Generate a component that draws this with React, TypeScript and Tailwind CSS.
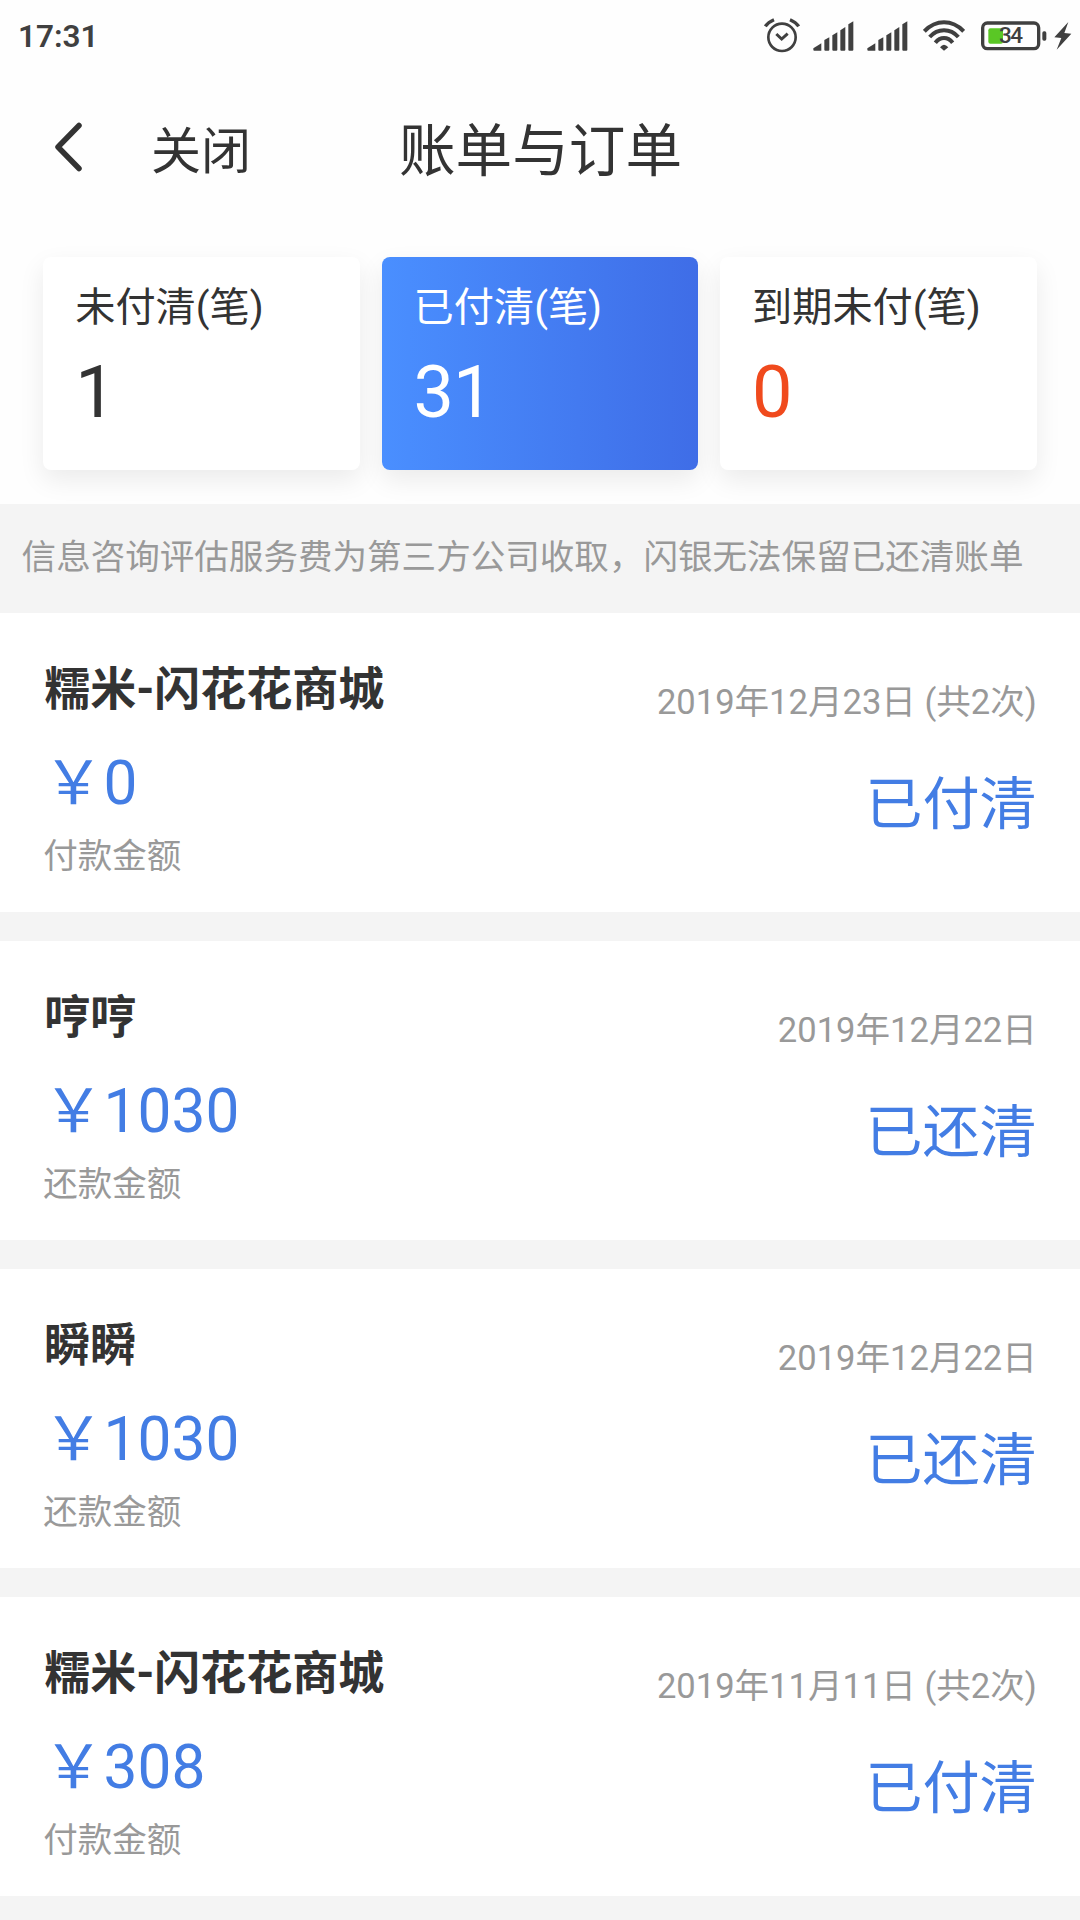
import { clsx } from 'clsx'

interface Summary {
  label: string
  count: number
  tone: 'normal' | 'active' | 'alert'
}

interface Bill {
  id: number
  title: string
  date: string
  amount: string
  amountLabel: string
  status: string
}

const summaries: Summary[] = [
  { label: '未付清(笔)', count: 1, tone: 'normal' },
  { label: '已付清(笔)', count: 31, tone: 'active' },
  { label: '到期未付(笔)', count: 0, tone: 'alert' },
]

const bills: Bill[] = [
  { id: 1, title: '糯米-闪花花商城', date: '2019年12月23日 (共2次)', amount: '0', amountLabel: '付款金额', status: '已付清' },
  { id: 2, title: '哼哼', date: '2019年12月22日', amount: '1030', amountLabel: '还款金额', status: '已还清' },
  { id: 3, title: '瞬瞬', date: '2019年12月22日', amount: '1030', amountLabel: '还款金额', status: '已还清' },
  { id: 4, title: '糯米-闪花花商城', date: '2019年11月11日 (共2次)', amount: '308', amountLabel: '付款金额', status: '已付清' },
]

function AlarmIcon() {
  return (
    <svg className="h-[35px] w-9" viewBox="72 56 108 105" fill="none" stroke="#404040" strokeWidth="8">
      <circle cx="126" cy="114" r="41" />
      <path d="M109 104l16 15 18-16" strokeWidth="9" />
      <path d="M76 81q9-13 26-20M176 81q-9-13-26-20" strokeWidth="10" />
    </svg>
  )
}

function SignalIcon() {
  return (
    <svg className="h-[30px] w-[41px]" viewBox="218 61 123 90" fill="#404040">
      <path d="M219 143L243 128V150H222Q219 150 219 147Z" />
      <path d="M252 118L267 110V147Q267 150 264 150H255Q252 150 252 147Z" />
      <path d="M276 104L291 95V147Q291 150 288 150H279Q276 150 276 147Z" />
      <path d="M300 89L315 79V147Q315 150 312 150H303Q300 150 300 147Z" />
      <path d="M324 71L339 62V147Q339 150 336 150H327Q324 150 324 147Z" />
    </svg>
  )
}

function WifiIcon() {
  return (
    <svg className="h-[31px] w-[42px]" viewBox="549 61 126 93" fill="none" stroke="#404040" strokeWidth="12">
      <path d="M553 95Q579 68 612 68T671 95" />
      <path d="M569 112Q587 92 612 92T655 112" />
      <path d="M586 129Q597 115 612 115T638 129" />
      <path d="M600 143Q606 135 612 135T625 143L612 153Z" fill="#404040" stroke="none" />
    </svg>
  )
}

function BatteryIcon() {
  return (
    <div className="relative h-[30px] w-[66px]">
      <svg className="h-[30px] w-[66px]" viewBox="721 61 198 90">
        <rect x="726" y="67" width="168" height="77" rx="14" fill="none" stroke="#404040" strokeWidth="10" />
        <rect x="743" y="83" width="44" height="46" rx="6" fill="#5ac725" />
        <rect x="905" y="92" width="12" height="28" rx="5" fill="#404040" />
      </svg>
      <span className="absolute top-0 left-[18px] text-[22.5px] leading-[29px] font-medium tracking-[-1.5px] text-[#404040]">
        34
      </span>
    </div>
  )
}

function BoltIcon() {
  return (
    <svg className="h-7 w-[18px]" viewBox="941 67 54 84" fill="#404040">
      <path d="M984 67L942 113L963 115L949 150L993 102L972 100Z" />
    </svg>
  )
}

function StatusBar() {
  return (
    <div className="flex h-[76px] items-center justify-between pr-[8px] pb-[3px] pl-[18px]">
      <span className="text-[31.5px] leading-10 font-semibold text-[#404040]">17:31</span>
      <div className="flex items-center pb-[2px]">
        <AlarmIcon />
        <div className="ml-[13px] flex gap-[13px]">
          <SignalIcon />
          <SignalIcon />
        </div>
        <div className="ml-[15px] flex items-center gap-4">
          <WifiIcon />
          <BatteryIcon />
        </div>
        <div className="ml-[7px]">
          <BoltIcon />
        </div>
      </div>
    </div>
  )
}

function Header() {
  return (
    <header className="grid h-[152px] grid-cols-[1fr_auto_1fr] items-center text-[#333]">
      <div className="flex items-center pl-[54px]">
        <button aria-label="返回" className="pb-[10px]">
          <svg className="h-[50px] w-[30px]" viewBox="0 0 30 50" fill="none" stroke="#333" strokeWidth="5.5" strokeLinecap="round" strokeLinejoin="round">
            <path d="M25 3.5L4 25L25 46.5" />
          </svg>
        </button>
        <button className="ml-[67px] text-[50px] leading-[60px]">关闭</button>
      </div>
      <h1 className="pl-px text-[56.6px] leading-[68px]">账单与订单</h1>
    </header>
  )
}

function SummaryCard({ label, count, tone }: Summary) {
  return (
    <div
      className={clsx(
        'h-[213px] rounded-lg px-8 pt-7 shadow-[0_10px_26px_rgba(0,0,0,0.08)]',
        tone === 'active' ? 'bg-linear-to-r from-[#4a8fff] to-[#3f6de7] text-white' : 'bg-white text-[#333]'
      )}
    >
      <p className="text-[40.2px] leading-[46px]">{label}</p>
      <p className={clsx('mt-[22px] text-[72px] leading-[80px] tracking-[-1px]', tone === 'alert' && 'text-[#f04a1d]')}>
        {count}
      </p>
    </div>
  )
}

function BillItem({ bill }: { bill: Bill }) {
  return (
    <li className="flex h-[299px] justify-between bg-white px-[43.2px]">
      <div className="pt-[51px]">
        <h2 className="pl-px text-[46px] leading-[50px] font-bold text-[#333]">{bill.title}</h2>
        <p className="mt-[35px] text-[60.4px] leading-[70px] text-[#437de4]">￥{bill.amount}</p>
        <p className="mt-[17px] text-[34.5px] leading-10 text-[#999]">{bill.amountLabel}</p>
      </div>
      <div className="pt-[69px] text-right">
        <p className="text-[34.56px] leading-10 text-[#999]">{bill.date}</p>
        <p className="mt-[53px] text-[57.2px] leading-[60px] text-[#437de4]">{bill.status}</p>
      </div>
    </li>
  )
}

export default function App() {
  return (
    <main className="flex h-[1920px] w-[1080px] flex-col overflow-hidden bg-[#f4f4f4] font-[Roboto,'Noto_Sans_CJK_SC',sans-serif]">
      <div className="h-[504px] overflow-hidden bg-[#fefefe]">
        <StatusBar />
        <Header />
        <section className="mt-[29px] grid grid-cols-3 gap-[21.6px] px-[43.2px]">
          {summaries.map((s) => (
            <SummaryCard key={s.label} {...s} />
          ))}
        </section>
      </div>

      <p className="h-[109px] pt-[33px] pl-[21.6px] text-[34.56px] leading-10 whitespace-nowrap text-[#999]">
        信息咨询评估服务费为第三方公司收取，闪银无法保留已还清账单
      </p>

      <ul className="flex flex-col gap-[29px]">
        {bills.map((bill) => (
          <BillItem key={bill.id} bill={bill} />
        ))}
      </ul>
    </main>
  )
}
